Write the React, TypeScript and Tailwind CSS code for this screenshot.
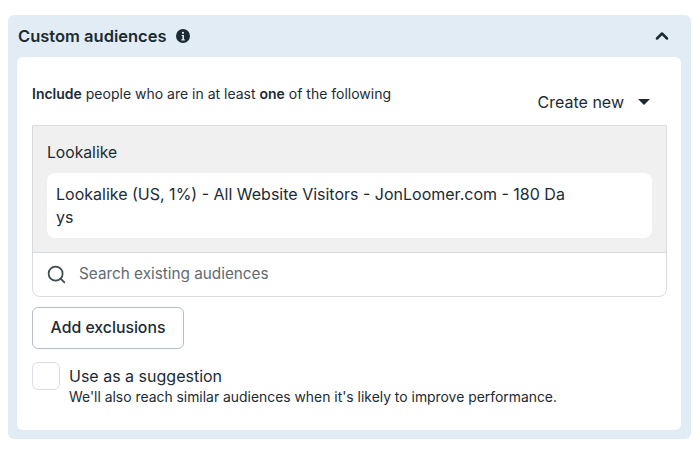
import { ChevronUp, Search } from "lucide-react"

export default function App() {
    return (
        <div className="h-[450px] w-[700px] overflow-hidden bg-white px-2 pt-[15px] font-['Inter',sans-serif] text-[#1c2b33]">
            <div className="h-[424px] w-[683px] rounded-md bg-[#e2ecf5] px-[9px]">
                <div className="flex h-[42px] items-center justify-between">
                    <div className="flex items-center gap-[9px] pl-px">
                        <h2 className="text-[16.5px] font-semibold">Custom audiences</h2>
                        <svg viewBox="0 0 16 16" className="h-[14px] w-[14px]" fill="currentColor">
                            <path d="M8 0a8 8 0 1 0 0 16A8 8 0 0 0 8 0Zm0 3a1.3 1.3 0 1 1 0 2.6A1.3 1.3 0 0 1 8 3ZM6.4 6.8h2.7v5h.9V13H6.2v-1.2h1.1V8H6.4V6.8Z" />
                        </svg>
                    </div>
                    <ChevronUp className="mr-[10px] h-[20px] w-[20px]" strokeWidth={3} />
                </div>
                <div className="h-[373px] w-[664px] rounded-md bg-white pl-[15px] pr-[14px]">
                    <div className="flex h-[68px] justify-between">
                        <p className="pt-[28px] text-[14px] leading-[18px]">
                            <span className="font-semibold">Include</span> people who are in at least{" "}
                            <span className="font-semibold">one</span> of the following
                        </p>
                        <button className="mr-[17px] flex items-center gap-[14px] pt-[22px] text-[16px]">
                            Create new
                            <span className="h-0 w-0 border-x-[6px] border-t-[6px] border-x-transparent border-t-[#1c2b33]" />
                        </button>
                    </div>
                    <div className="overflow-hidden rounded-b-lg border border-[#d9dcde]">
                        <div className="h-[127px] border-b border-[#d9dcde] bg-[#f0f0f0] px-[14px] pt-[17px]">
                            <p className="text-[15.7px] leading-[20px]">Lookalike</p>
                            <div className="mt-[10px] h-[65px] rounded-lg bg-white px-[9px] pt-[10px] text-[16px] leading-[23px]">
                                <p className="w-[512px] break-all">
                                    Lookalike (US, 1%) - All Website Visitors - JonLoomer.com - 180 Days
                                </p>
                            </div>
                        </div>
                        <div className="flex h-[43px] items-center gap-[12px] pl-[13px] text-[#5f6b73]">
                            <Search className="h-[21px] w-[21px] text-[#3e4b53]" strokeWidth={2} />
                            <span className="text-[15.3px]">Search existing audiences</span>
                        </div>
                    </div>
                    <button className="mt-[10px] block h-[42px] w-[152px] rounded-md border border-[#b3bfc9] text-[15.8px] font-[450]">
                        Add exclusions
                    </button>
                    <div className="mt-[13px] flex gap-[9px]">
                        <span className="h-[28px] w-[28px] rounded-md border border-[#d9dee3]" />
                        <div className="pt-1">
                            <p className="text-[16px] leading-[21px]">Use as a suggestion</p>
                            <p className="text-[13.9px] leading-[20px]">
                                We'll also reach similar audiences when it's likely to improve performance.
                            </p>
                        </div>
                    </div>
                </div>
            </div>
        </div>
    )
}
